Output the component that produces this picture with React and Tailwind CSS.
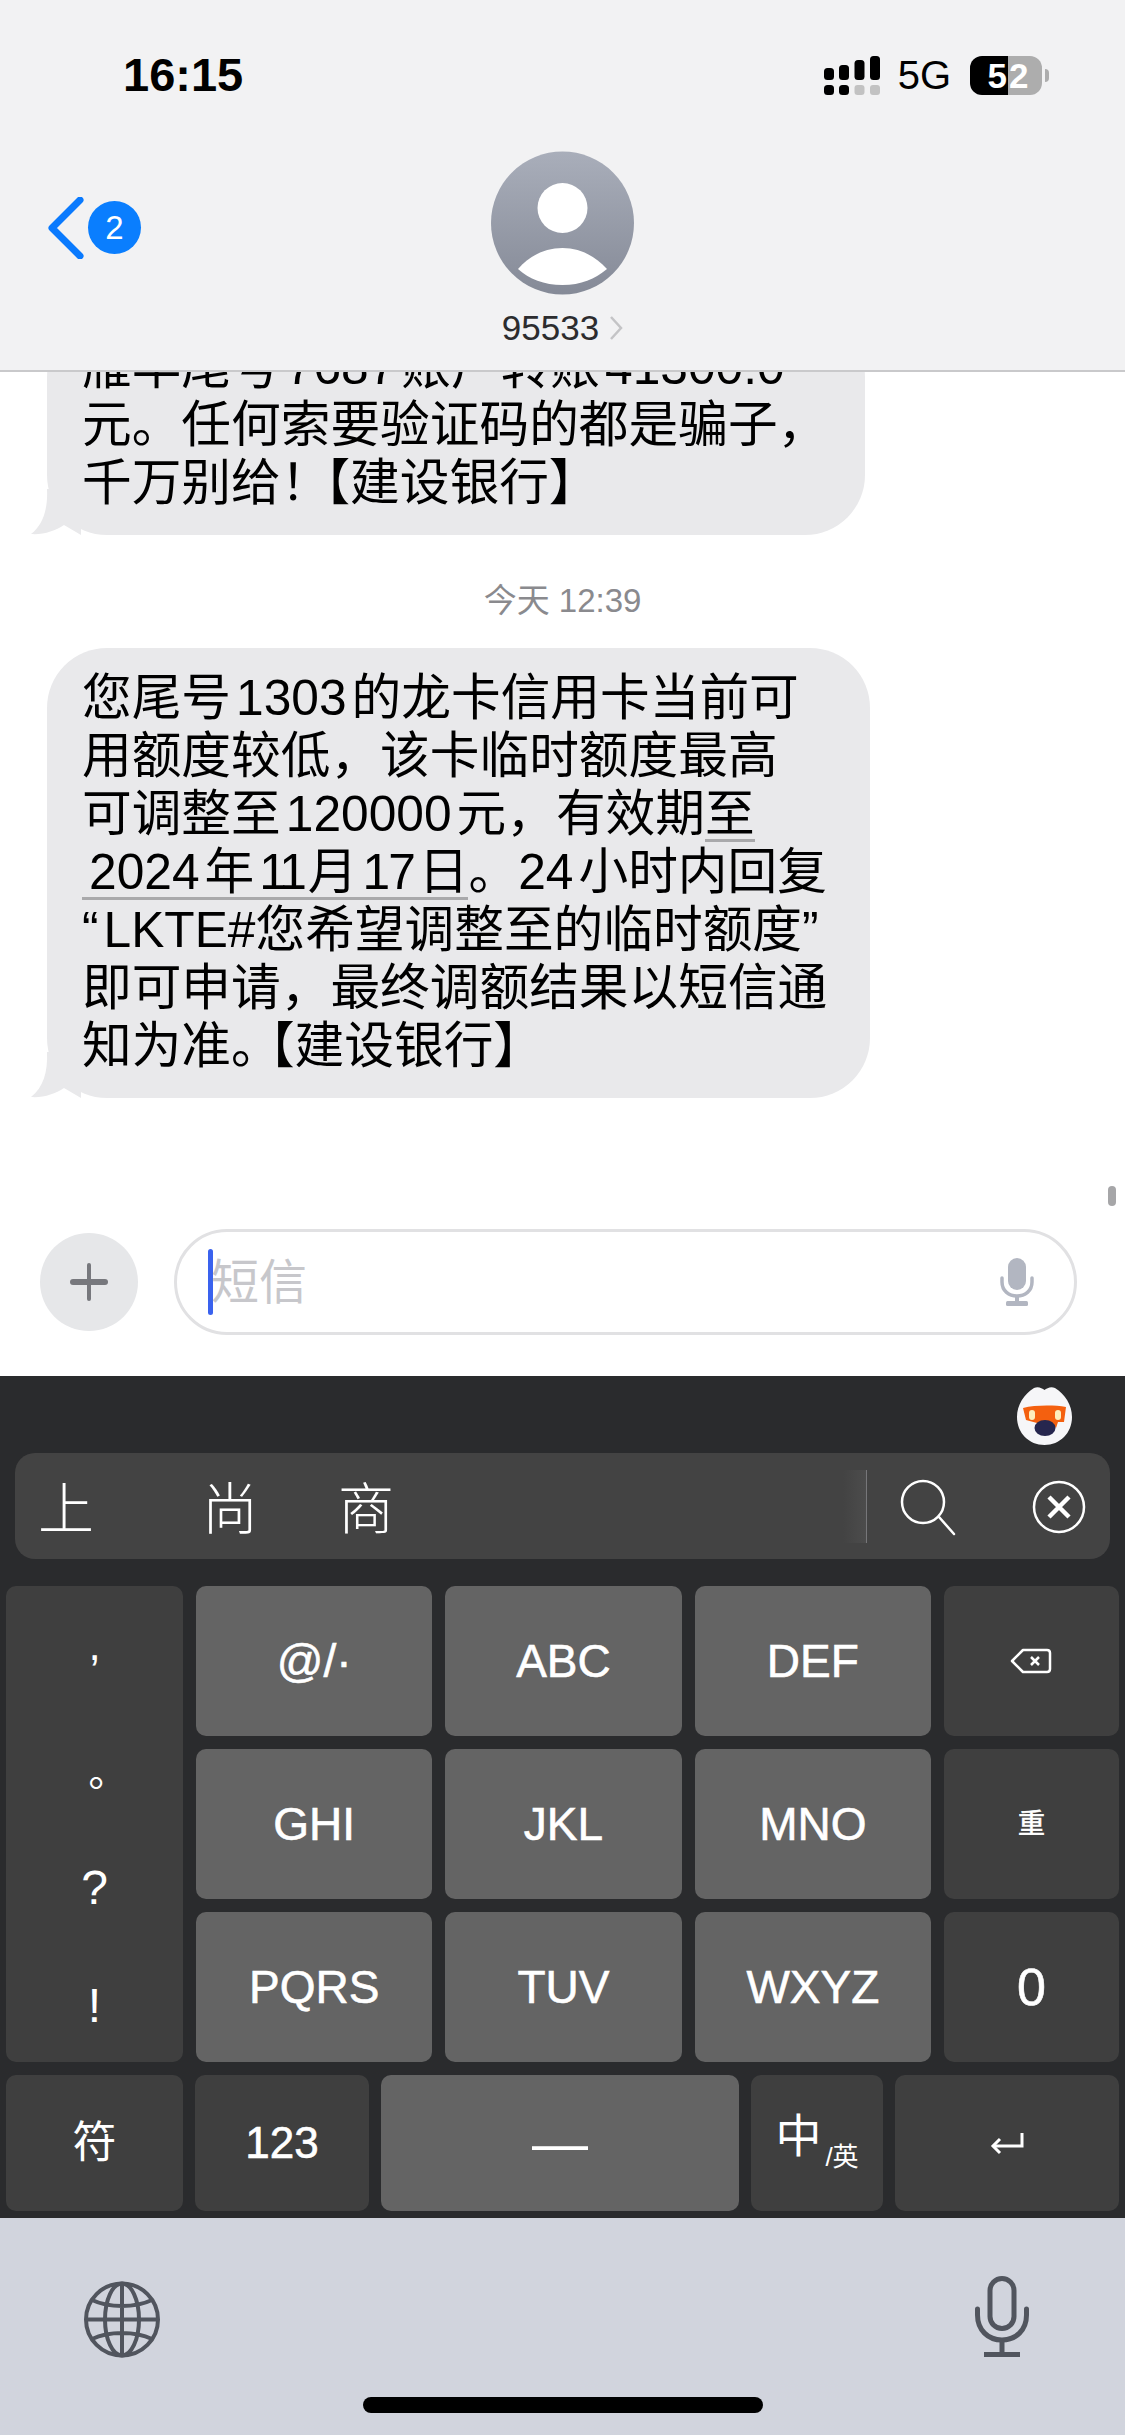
import { Fragment } from 'react'

const Gap = () => <span className="inline-block w-[5px]" />

function StatusBar() {
  return (
    <div className="flex h-[151px] justify-between pt-[50px] pl-[123px] pr-[76px]">
      <div className="flex h-[50px] items-center text-[47px] font-bold text-black">16:15</div>
      <div className="flex h-[50px] items-center">
        <svg width="56" height="39" viewBox="0 0 56 39">
          <rect x="0" y="12" width="10" height="12" rx="3.5" fill="#000" />
          <rect x="15" y="9" width="10" height="15" rx="3.5" fill="#000" />
          <rect x="30.5" y="4" width="10" height="20" rx="3.5" fill="#000" />
          <rect x="46" y="0" width="10" height="24" rx="3.5" fill="#000" />
          <rect x="0" y="29" width="10" height="10" rx="3.5" fill="#000" />
          <rect x="15" y="29" width="10" height="10" rx="3.5" fill="#000" />
          <rect x="30.5" y="29" width="10" height="10" rx="3" fill="#c2c2c2" />
          <rect x="46" y="29" width="10" height="10" rx="3" fill="#c2c2c2" />
        </svg>
        <span className="ml-[18px] text-[40px] text-black">5G</span>
        <div className="ml-[19px] flex h-[39px] w-[72px] overflow-hidden rounded-[12px] text-[35px] leading-[39px] font-bold text-white">
          <div className="flex w-[38px] justify-end bg-black pr-[1px]">5</div>
          <div className="flex-1 bg-[#adadad] pl-[1px]">2</div>
        </div>
        <div className="ml-[3px] h-[13px] w-[4px] rounded-r-full bg-[#adadad]" />
      </div>
    </div>
  )
}

function Contact() {
  return (
    <div className="grid grid-cols-[1fr_143px_1fr]">
      <div className="flex items-center pt-[20px] pl-[48px] pb-[60px]">
        <svg width="36" height="62" viewBox="0 0 36 62" fill="none">
          <path d="M32 3 L4 31 L32 59" stroke="#0a7afe" strokeWidth="7" strokeLinecap="round" strokeLinejoin="round" />
        </svg>
        <div className="ml-[4px] flex h-[53px] w-[53px] items-center justify-center rounded-full bg-[#0a7efe] text-[33px] text-white">2</div>
      </div>
      <div className="flex flex-col items-center">
        <svg className="shrink-0" width="143" height="144" viewBox="0 0 143 144">
          <defs>
            <linearGradient id="avatarFill" x1="0" y1="0" x2="0" y2="1">
              <stop offset="0" stopColor="#a9aeba" />
              <stop offset="1" stopColor="#858a97" />
            </linearGradient>
          </defs>
          <circle cx="71.5" cy="72" r="71.5" fill="url(#avatarFill)" />
          <circle cx="71.5" cy="57" r="25" fill="#fff" />
          <path d="M27 118 C38 105 54 97 71.5 97 C89 97 104 105 116 118 C104 128 90 134 71.5 134 C53 134 38 128 27 118Z" fill="#fff" />
        </svg>
        <div className="mt-[17px] flex h-[32px] items-center whitespace-nowrap text-[35px] text-[#2c2c2e]">
          95533
          <svg className="ml-[10px]" width="14" height="26" viewBox="0 0 14 26" fill="none">
            <path d="M2 2 L12 13 L2 24" stroke="#c4c4c6" strokeWidth="2.5" />
          </svg>
        </div>
      </div>
      <div />
    </div>
  )
}

function Bubble({ lines, wide }) {
  return (
    <div className={`relative ml-[47px] shrink-0 rounded-[60px] bg-[#e9e9eb] pt-[21px] pb-[23px] pl-[35px] text-[49.7px] leading-[58px] text-black ${wide ? 'w-[823px]' : 'w-[818px]'}`}>
      <svg className="absolute bottom-0 left-[-16px]" width="50" height="46" viewBox="0 0 50 46">
        <path d="M16 0 C17 20 12 36 0 45 C12 46 24 42 33 36 L50 46 L50 0Z" fill="#e9e9eb" />
      </svg>
      <div className="relative whitespace-nowrap">
        {lines.map((line, i) => (
          <div key={i} className="h-[58px]">{line}</div>
        ))}
      </div>
    </div>
  )
}

const oldLines = [
  <Fragment>雁丰尾号<Gap />7687<Gap />账户转账<Gap />41300.0</Fragment>,
  <Fragment>元。任何索要验证码的都是骗子，</Fragment>,
  <Fragment>千万别给！<span className="ml-[-30px]">【建设银行】</span></Fragment>,
]

const newLines = [
  <Fragment>您尾号<Gap />1303<Gap />的龙卡信用卡当前可</Fragment>,
  <Fragment>用额度较低，该卡临时额度最高</Fragment>,
  <Fragment>
    可调整至<Gap />120000<Gap />元，有效期
    <span className="inline-block border-b-[3px] border-[#a9a9ab] leading-[50px]">至</span>
  </Fragment>,
  <Fragment>
    <span className="inline-block border-b-[3px] border-[#a9a9ab] pl-[7px] leading-[50px]">
      2024<Gap />年<Gap /><span className="tracking-[-4px]">11</span><Gap />月<Gap /><span className="tracking-[-2px]">17</span><Gap />日
    </span>
    。24<Gap />小时内回复
  </Fragment>,
  <Fragment>“<Gap />LKTE#您希望调整至的临时额度”</Fragment>,
  <Fragment>即可申请，最终调额结果以短信通</Fragment>,
  <Fragment>知为准。<span className="ml-[-11px]">【建设银行】</span></Fragment>,
]

function Composer() {
  return (
    <div className="flex h-[188px] shrink-0 items-center pl-[40px]">
      <div className="flex h-[98px] w-[98px] items-center justify-center rounded-full bg-[#e6e7e9]">
        <svg width="38" height="38" viewBox="0 0 38 38">
          <rect x="17" y="0" width="4" height="38" rx="2" fill="#77787d" />
          <rect x="0" y="16" width="38" height="6" rx="3" fill="#77787d" />
        </svg>
      </div>
      <div className="ml-[36px] flex h-[106px] w-[903px] items-center rounded-[53px] border-[3px] border-[#e1e1e3] bg-white pl-[31px] pr-[40px]">
        <div className="h-[66px] w-[5px] rounded-full bg-[#3a62ee]" />
        <span className="ml-[-2px] pt-[2px] text-[48px] text-[#c7c7cb]">短信</span>
        <svg className="ml-auto" width="34" height="48" viewBox="0 0 34 48" fill="none">
          <rect x="8" y="0" width="18" height="32" rx="9" fill="#b2b6c1" />
          <path d="M2 20 V24 C2 33 9 38 17 38 C25 38 32 33 32 24 V20" stroke="#b2b6c1" strokeWidth="3.5" strokeLinecap="round" />
          <path d="M17 38 V44" stroke="#b2b6c1" strokeWidth="4" />
          <rect x="6" y="43" width="22" height="5" rx="1.5" fill="#b2b6c1" />
        </svg>
      </div>
    </div>
  )
}

function Key({ light, className = '', children }) {
  return (
    <div className={`flex items-center justify-center rounded-[10px] text-white ${light ? 'bg-[#646464]' : 'bg-[#3f3f3f]'} ${className}`}>
      {children}
    </div>
  )
}

function Mascot() {
  return (
    <svg width="55" height="60" viewBox="0 0 55 60">
      <path d="M17 3 C21 1 25 3 27.5 5 C30 3 34 1 38 3 C48 9 55 20 55 32 C55 48 43 60 27.5 60 C12 60 0 48 0 32 C0 20 7 9 17 3Z" fill="#f6f6f8" />
      <path d="M6 23 C18 20 37 20 49 22 L47 37 L41 37 L39 43 L35 38 L20 38 L9 35Z" fill="#f4600f" />
      <rect x="12" y="25" width="6" height="10" rx="3" fill="#fdeebd" />
      <rect x="38" y="25" width="6" height="10" rx="3" fill="#fdeebd" />
      <ellipse cx="28" cy="43" rx="10.5" ry="8" fill="#26264e" />
    </svg>
  )
}

function Candidates() {
  return (
    <div className="mx-[15px] flex h-[106px] items-center rounded-[20px] bg-[#434343] pr-[24px] text-[56px] leading-none font-light text-white">
      <span className="ml-[23px] w-[56px] pt-[8px]">上</span>
      <span className="ml-[108px] w-[56px] pt-[8px]">尚</span>
      <span className="ml-[80px] w-[56px] pt-[8px]">商</span>
      <div className="ml-[449px] h-[73px] w-[24px] border-r-[1px] border-[#77777a] bg-gradient-to-r from-[#434343] to-[#4c4c4c]" />
      <svg className="mt-[4px] ml-[32px]" width="60" height="60" viewBox="0 0 60 60" fill="none" stroke="#fff">
        <circle cx="24" cy="24" r="21" strokeWidth="2.5" />
        <path d="M40 39 L55 56" strokeWidth="2.5" strokeLinecap="round" />
      </svg>
      <svg className="mt-[1px] ml-auto" width="54" height="54" viewBox="0 0 54 54" fill="none" stroke="#fff">
        <circle cx="27" cy="27" r="25" strokeWidth="2.5" />
        <path d="M17 17 L37 37 M37 17 L17 37" strokeWidth="4.5" />
      </svg>
    </div>
  )
}

function Keyboard() {
  return (
    <div className="shrink-0 bg-[#2a2b2d] pb-[7px]">
      <div className="flex h-[77px] justify-end pt-[9px] pr-[53px]">
        <Mascot />
      </div>
      <Candidates />
      <div className="mt-[27px] grid grid-cols-[177px_1fr_1fr_1fr_175px] grid-rows-[150px_150px_150px] gap-x-[13px] gap-y-[13px] px-[6px] text-[46px] [-webkit-text-stroke:0.6px_white]">
        <div className="row-span-3 flex flex-col items-center rounded-[10px] bg-[#3f3f3f] text-white [-webkit-text-stroke:0]">
          <span className="mt-[34px] h-[60px] text-[44px] leading-[50px]">,</span>
          <span className="mt-[77px] ml-[3px] h-[48px] font-['Noto_Sans_CJK_TC'] text-[40px] leading-[48px]">。</span>
          <span className="mt-[53px] h-[60px] text-[48px] leading-[60px]">?</span>
          <span className="mt-[58px] h-[60px] text-[48px] leading-[60px]">!</span>
        </div>
        <Key light>@/·</Key>
        <Key light>ABC</Key>
        <Key light>DEF</Key>
        <Key>
          <svg width="42" height="26" viewBox="0 0 42 26" fill="none" stroke="#fff" strokeWidth="2.5">
            <path d="M13 2 H37 Q40 2 40 5 V21 Q40 24 37 24 H13 L2 13Z" strokeLinejoin="round" />
            <path d="M21 9 L29 17 M29 9 L21 17" />
          </svg>
        </Key>
        <Key light>GHI</Key>
        <Key light>JKL</Key>
        <Key light>MNO</Key>
        <Key className="text-[27px]">重</Key>
        <Key light>PQRS</Key>
        <Key light>TUV</Key>
        <Key light>WXYZ</Key>
        <Key className="text-[52px]">0</Key>
      </div>
      <div className="mt-[13px] grid h-[136px] grid-cols-[177px_174px_1fr_132px_224px] gap-x-[12px] px-[6px] text-[44px]">
        <Key>符</Key>
        <Key className="[-webkit-text-stroke:0.6px_white]">123</Key>
        <Key light className="text-[56px]">—</Key>
        <Key>
          <span className="mb-[14px] text-[46px] leading-none">中</span>
          <span className="mt-[28px] ml-[4px] text-[26px] leading-none">/英</span>
        </Key>
        <Key>
          <svg width="34" height="24" viewBox="0 0 34 24" fill="none" stroke="#fff" strokeWidth="3">
            <path d="M32 2 V15 H3" />
            <path d="M10 8 L3 15 L10 22" />
          </svg>
        </Key>
      </div>
    </div>
  )
}

function BottomPanel() {
  return (
    <div className="flex h-[217px] shrink-0 flex-col bg-[#d1d4dd]">
      <div className="flex h-[179px] items-start justify-between pl-[84px] pr-[96px]">
        <svg className="mt-[63px]" width="76" height="77" viewBox="0 0 76 77" fill="none" stroke="#51555e" strokeWidth="4">
          <circle cx="38" cy="38.5" r="36" />
          <ellipse cx="38" cy="38.5" rx="17" ry="36" />
          <path d="M38 2 V75 M2 38.5 H74 M8 19 C25 27 51 27 68 19 M8 58 C25 50 51 50 68 58" />
        </svg>
        <svg className="mt-[58px]" width="54" height="81" viewBox="0 0 54 81" fill="none" stroke="#51555e" strokeWidth="5">
          <rect x="15" y="2.5" width="24" height="50" rx="12" />
          <path d="M2.5 33 V39 C2.5 54 13 64 27 64 C41 64 51.5 54 51.5 39 V33" strokeLinecap="round" />
          <path d="M27 64 V78 M9 78.5 H45" />
        </svg>
      </div>
      <div className="mx-auto h-[16px] w-[400px] rounded-full bg-black" />
    </div>
  )
}

export default function App() {
  return (
    <div className="flex h-[2435px] w-[1125px] flex-col overflow-hidden bg-white font-['Liberation_Sans','Noto_Sans_CJK_SC',sans-serif]">
      <header className="relative z-10 h-[372px] shrink-0 border-b-2 border-[#c9c9cb] bg-[#f2f2f3]">
        <StatusBar />
        <Contact />
      </header>
      <main className="relative flex min-h-0 flex-1 flex-col justify-end pb-[90px]">
        <Bubble lines={oldLines} />
        <div className="mt-[46px] mb-[27px] text-center text-[33px] leading-[40px] text-[#8a8a8e]">今天 12:39</div>
        <Bubble lines={newLines} wide />
        <div className="absolute right-[9px] bottom-[-18px] h-[20px] w-[8px] rounded-full bg-[#a6a6a8]" />
      </main>
      <Composer />
      <Keyboard />
      <BottomPanel />
    </div>
  )
}
